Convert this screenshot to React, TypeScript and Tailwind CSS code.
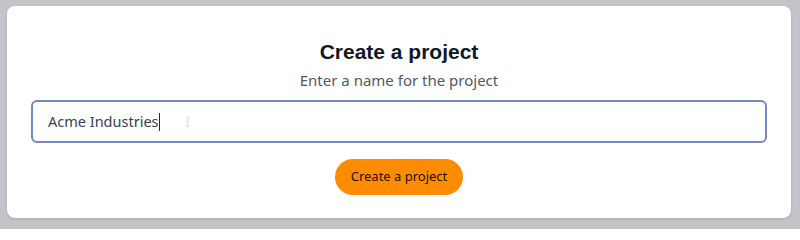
import React, { useState } from 'react';

export default function App() {
  const [name] = useState('Acme Industries');

  return (
    <div className="w-[800px] h-[229px] overflow-hidden bg-[#c3c4c9] pt-[6px] pl-[7px] font-['Noto_Sans','Open_Sans',sans-serif]">
      <div className="w-[784px] h-[212px] rounded-lg bg-white shadow-sm flex flex-col items-center px-6 pt-[32px]">
        <h2 className="text-[21px] leading-7 font-bold text-[#111827] font-['Liberation_Sans',Arial,sans-serif]">
          Create a project
        </h2>
        <p className="mt-[3px] text-[15px] leading-[22px] text-[#4f5868]">
          Enter a name for the project
        </p>

        <div className="relative mt-[9px] w-full h-[43px] rounded-md border-2 border-[#7389c4] flex items-center pl-[15px]">
          <span className="text-[14.5px] text-[#374151]">{name}</span>
          <span className="w-px h-[18px] bg-[#1f2937]" />
          {/* mouse I-beam hovering over the field */}
          <span className="absolute left-[152px] top-[10px] text-[16px] leading-5 text-[#e3e4e6] font-['Liberation_Serif',serif]">
            I
          </span>
        </div>

        <button
          type="button"
          className="mt-4 w-[128px] h-9 rounded-full bg-[#ff8c00] text-[13px] text-[#1a1208]"
        >
          Create a project
        </button>
      </div>
    </div>
  );
}
